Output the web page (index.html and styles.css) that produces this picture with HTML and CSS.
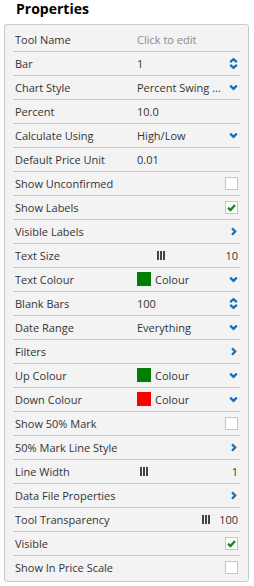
FILE: index.html
```html
<!DOCTYPE html>
<html lang="en">
<head>
  <meta charset="UTF-8">
  <title>Properties</title>
  <link rel="stylesheet" href="styles.css">
</head>
<body>

<h1 class="title">Properties</h1>

<div class="panel">
  <div class="row"><span class="label">Tool Name</span><span class="value muted">Click to edit</span></div>
  <div class="row"><span class="label">Bar</span><span class="value">1</span>
    <svg class="icon" viewBox="0 0 9 11"><path d="M1.2 4.2 4.5 1.2 7.8 4.2M1.2 6.8 4.5 9.8 7.8 6.8"/></svg></div>
  <div class="row"><span class="label">Chart Style</span><span class="value">Percent Swing …</span>
    <svg class="icon" viewBox="0 0 9 11"><path d="M1.2 3.6 4.5 6.8 7.8 3.6"/></svg></div>
  <div class="row"><span class="label">Percent</span><span class="value">10.0</span></div>
  <div class="row"><span class="label">Calculate Using</span><span class="value">High/Low</span>
    <svg class="icon" viewBox="0 0 9 11"><path d="M1.2 3.6 4.5 6.8 7.8 3.6"/></svg></div>
  <div class="row"><span class="label">Default Price Unit</span><span class="value">0.01</span></div>
  <div class="row"><span class="label">Show Unconfirmed</span><span class="value"></span><span class="check"></span></div>
  <div class="row"><span class="label">Show Labels</span><span class="value"></span>
    <span class="check"><svg viewBox="0 0 12 12"><path d="M2.2 6.2 4.8 8.8 9.8 3.4"/></svg></span></div>
  <div class="row"><span class="label">Visible Labels</span><span class="value"></span>
    <svg class="icon" viewBox="0 0 9 11"><path d="M3 2.2 6.2 5.5 3 8.8"/></svg></div>
  <div class="row"><span class="label">Text Size</span>
    <span class="value slider"><span class="thumb" style="margin-left: 20px"></span><span class="num">10</span></span></div>
  <div class="row"><span class="label">Text Colour</span>
    <span class="value"><span class="swatch green"></span>Colour</span>
    <svg class="icon" viewBox="0 0 9 11"><path d="M1.2 3.6 4.5 6.8 7.8 3.6"/></svg></div>
  <div class="row"><span class="label">Blank Bars</span><span class="value">100</span>
    <svg class="icon" viewBox="0 0 9 11"><path d="M1.2 4.2 4.5 1.2 7.8 4.2M1.2 6.8 4.5 9.8 7.8 6.8"/></svg></div>
  <div class="row"><span class="label">Date Range</span><span class="value">Everything</span>
    <svg class="icon" viewBox="0 0 9 11"><path d="M1.2 3.6 4.5 6.8 7.8 3.6"/></svg></div>
  <div class="row"><span class="label">Filters</span><span class="value"></span>
    <svg class="icon" viewBox="0 0 9 11"><path d="M3 2.2 6.2 5.5 3 8.8"/></svg></div>
  <div class="row"><span class="label">Up Colour</span>
    <span class="value"><span class="swatch green"></span>Colour</span>
    <svg class="icon" viewBox="0 0 9 11"><path d="M1.2 3.6 4.5 6.8 7.8 3.6"/></svg></div>
  <div class="row"><span class="label">Down Colour</span>
    <span class="value"><span class="swatch red"></span>Colour</span>
    <svg class="icon" viewBox="0 0 9 11"><path d="M1.2 3.6 4.5 6.8 7.8 3.6"/></svg></div>
  <div class="row"><span class="label">Show 50% Mark</span><span class="value"></span><span class="check"></span></div>
  <div class="row"><span class="label">50% Mark Line Style</span><span class="value"></span>
    <svg class="icon" viewBox="0 0 9 11"><path d="M3 2.2 6.2 5.5 3 8.8"/></svg></div>
  <div class="row"><span class="label">Line Width</span>
    <span class="value slider"><span class="thumb" style="margin-left: 3px"></span><span class="num">1</span></span></div>
  <div class="row"><span class="label">Data File Properties</span><span class="value"></span>
    <svg class="icon" viewBox="0 0 9 11"><path d="M3 2.2 6.2 5.5 3 8.8"/></svg></div>
  <div class="row"><span class="label">Tool Transparency</span>
    <span class="value slider"><span class="thumb" style="margin-left: 65px"></span><span class="num">100</span></span></div>
  <div class="row"><span class="label">Visible</span><span class="value"></span>
    <span class="check"><svg viewBox="0 0 12 12"><path d="M2.2 6.2 4.8 8.8 9.8 3.4"/></svg></span></div>
  <div class="row"><span class="label">Show In Price Scale</span><span class="value"></span><span class="check"></span></div>
</div>

</body>
</html>
```

FILE: styles.css
```css
* { box-sizing: border-box; }

body {
  margin: 0;
  padding: 0 5px 5px 4px;
  background: #fff;
  font-family: "Open Sans", "Liberation Sans", sans-serif;
  color: #333;
}

.title {
  margin: 0 0 8px;
  padding: 1px 0 0 12px;
  font-size: 14px;
  line-height: 15px;
  font-weight: 700;
  color: #000;
}

.panel {
  background: #f3f3f3;
  border: 1px solid #c9c9c9;
  border-radius: 3px;
  padding: 3px 8px 1px 8px;
}

.row {
  display: grid;
  grid-template-columns: 122px 1fr auto;
  align-items: center;
  height: 24px;
  padding: 0 2px 1px;
  border-bottom: 1px solid #cacaca;
  font-size: 11px;
  line-height: 15px;
  white-space: nowrap;
}

.row:last-child {
  border-bottom: none;
}

.value {
  display: flex;
  align-items: center;
  overflow: hidden;
}

.muted {
  color: #8a8a8a;
}

.icon {
  width: 9px;
  height: 11px;
  fill: none;
  stroke: #1a6bb8;
  stroke-width: 2.3;
  stroke-linecap: butt;
  stroke-linejoin: miter;
}

.check {
  display: block;
  width: 13px;
  height: 13px;
  background: #fff;
  border: 1px solid #c6c6c6;
}

.check svg {
  display: block;
  width: 11px;
  height: 11px;
  fill: none;
  stroke: #1e8a1e;
  stroke-width: 2.6;
}

.swatch {
  width: 14px;
  height: 14px;
  margin-right: 4px;
}

.swatch.green { background: #008000; }
.swatch.red { background: #ff0000; }

/* small slider handle with the value at the far right */
.slider {
  grid-column: 2 / 4;
}

.thumb {
  width: 8px;
  height: 9px;
  background: repeating-linear-gradient(to right, #444 0 2px, transparent 2px 3px);
}

.num {
  margin-left: auto;
}
```
